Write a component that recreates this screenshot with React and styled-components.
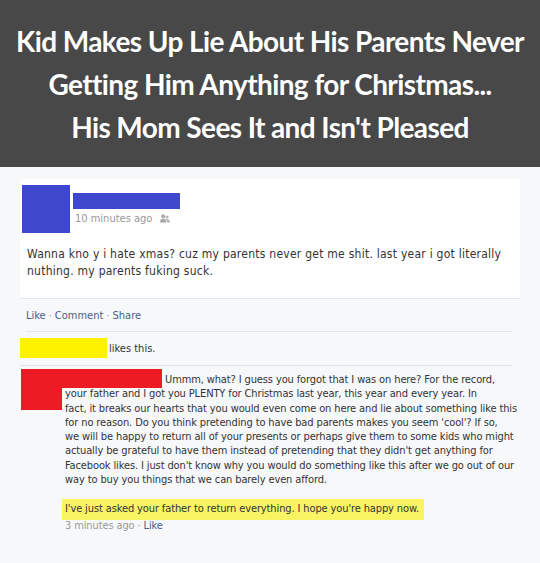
import React from 'react';
import styled, { createGlobalStyle } from 'styled-components';

const GlobalStyle = createGlobalStyle`
  html, body {
    margin: 0;
    padding: 0;
    background: #f7f8fa;
  }
`;

const post = {
  time: '10 minutes ago',
  text: 'Wanna kno y i hate xmas? cuz my parents never get me shit. last year i got literally nuthing. my parents fuking suck.'
};

// the reply is laid out line by line, as it wraps in the screenshot
const reply = {
  lines: [
    'Ummm, what? I guess you forgot that I was on here? For the record,',
    'your father and I got you PLENTY for Christmas last year, this year and every year. In',
    'fact, it breaks our hearts that you would even come on here and lie about something like this',
    "for no reason. Do you think pretending to have bad parents makes you seem 'cool'? If so,",
    'we will be happy to return all of your presents or perhaps give them to some kids who might',
    "actually be grateful to have them instead of pretending that they didn't get anything for",
    "Facebook likes. I just don't know why you would do something like this after we go out of our",
    'way to buy you things that we can barely even afford.'
  ],
  highlight: "I've just asked your father to return everything. I hope you're happy now.",
  time: '3 minutes ago'
};

const FriendsIcon = () => (
  <svg width="10" height="9" viewBox="0 0 10 9">
    <circle cx="3.2" cy="2.2" r="1.9" fill="#a8a8a8" />
    <path d="M0 8.6 C0 5.6 1.4 4.6 3.2 4.6 C5 4.6 6.4 5.6 6.4 8.6 Z" fill="#a8a8a8" />
    <circle cx="7" cy="3" r="1.6" fill="#b8b8b8" />
    <path d="M5.6 5.4 C6 5.1 6.4 5 7 5 C8.6 5 10 5.8 10 8.6 L7.2 8.6 C7.2 7 6.6 6 5.6 5.4 Z" fill="#b8b8b8" />
  </svg>
);

const App = () => (
  <Page>
    <GlobalStyle />
    <Banner>
      <BannerLine>Kid Makes Up Lie About His Parents Never</BannerLine>
      <BannerLine>Getting Him Anything for Christmas...</BannerLine>
      <BannerLine>His Mom Sees It and Isn't Pleased</BannerLine>
    </Banner>

    <Feed>
      <PostCard>
        <PostHead>
          <Avatar color="#3f48cc" size={48} />
          <HeadInfo>
            <NameBar color="#3f48cc" />
            <Meta>
              {post.time}
              <FriendsIcon />
            </Meta>
          </HeadInfo>
        </PostHead>
        <PostText>{post.text}</PostText>
      </PostCard>

      <Actions>
        <Link>Like</Link>
        <Dot>·</Dot>
        <Link>Comment</Link>
        <Dot>·</Dot>
        <Link>Share</Link>
      </Actions>

      <LikesRow>
        <Redacted color="#fff200" width={87} height={20} />
        <LikesText>likes this.</LikesText>
      </LikesRow>

      <CommentRow>
        <Avatar color="#ed1c24" size={41} />
        <CommentBody>
          {reply.lines.map((line, idx) => (
            <CommentLine key={idx}>
              {idx === 0 && <InlineName />}
              {line}
            </CommentLine>
          ))}
          <Highlight>{reply.highlight}</Highlight>
          <CommentMeta>
            {reply.time}
            <Dot>·</Dot>
            <Link>Like</Link>
          </CommentMeta>
        </CommentBody>
      </CommentRow>
    </Feed>
  </Page>
);

// === Styled Components ===

const fbFont = `"DejaVu Sans Condensed", "DejaVu Sans", "Liberation Sans", sans-serif`;

const Page = styled.div`
  min-height: 563px;
  background: #f7f8fa;
`;

const Banner = styled.header`
  background: #484848;
  height: 167px;
  padding-top: 20px;
  box-sizing: border-box;
  display: flex;
  flex-direction: column;
  align-items: center;
`;

const BannerLine = styled.div`
  color: #fff;
  font-family: "Lato", "Liberation Sans", sans-serif;
  font-weight: 700;
  font-size: 28px;
  line-height: 43px;
  letter-spacing: -0.6px;
  white-space: nowrap;
`;

const Feed = styled.main`
  padding: 12px 20px 0;
`;

const PostCard = styled.section`
  background: #fff;
  padding: 6px 8px 18px 2px;
  border-bottom: 1px solid #e3e5e9;
`;

const PostHead = styled.div`
  display: flex;
  align-items: flex-start;
  gap: 3px;
`;

const Avatar = styled.div`
  flex: none;
  width: ${p => p.size}px;
  height: ${p => p.size}px;
  background: ${p => p.color};
`;

const HeadInfo = styled.div`
  display: flex;
  flex-direction: column;
  padding-top: 8px;
`;

const NameBar = styled.div`
  width: 107px;
  height: 16px;
  background: ${p => p.color};
`;

const Meta = styled.div`
  display: flex;
  align-items: center;
  gap: 8px;
  margin-top: 3px;
  padding-left: 2px;
  font-family: ${fbFont};
  font-size: 11px;
  color: #999;
`;

const PostText = styled.p`
  margin: 13px 0 0 5px;
  font-family: ${fbFont};
  font-size: 12px;
  line-height: 17px;
  letter-spacing: 0.25px;
  color: #333;
`;

const Actions = styled.div`
  display: flex;
  align-items: center;
  margin: 0 7px 0 6px;
  height: 32px;
  border-bottom: 1px solid #e3e5e9;
  font-family: ${fbFont};
  font-size: 11px;
`;

const Link = styled.span`
  color: #4a5d8f;
`;

const Dot = styled.span`
  color: #999;
  padding: 0 3px;
`;

const LikesRow = styled.div`
  display: flex;
  align-items: center;
  gap: 2px;
  padding: 6px 0 7px;
  margin-right: 7px;
  border-bottom: 1px solid #e3e5e9;
`;

const Redacted = styled.div`
  flex: none;
  width: ${p => p.width}px;
  height: ${p => p.height}px;
  background: ${p => p.color};
`;

const LikesText = styled.span`
  font-family: ${fbFont};
  font-size: 11px;
  color: #333;
`;

const CommentRow = styled.div`
  display: flex;
  align-items: flex-start;
  gap: 3px;
  padding: 3px 0 0 1px;
`;

const CommentBody = styled.div`
  flex: 1;
  padding: 4px 0 0 0;
  font-family: ${fbFont};
  font-size: 11px;
  line-height: 14.3px;
  letter-spacing: -0.12px;
  color: #333;
`;

const CommentLine = styled.div`
  white-space: nowrap;
`;

const InlineName = styled.span`
  display: inline-block;
  vertical-align: top;
  width: 100px;
  height: 19px;
  margin: -4px 3px -1px -3px;
  background: #ed1c24;
`;

const Highlight = styled.span`
  display: table;
  margin: 12px 0 0 -3px;
  padding: 3px 5px 3px 3px;
  background: #f8f464;
  color: #333;
`;

const CommentMeta = styled.div`
  margin-top: -1px;
  color: #999;
`;

export default App;
